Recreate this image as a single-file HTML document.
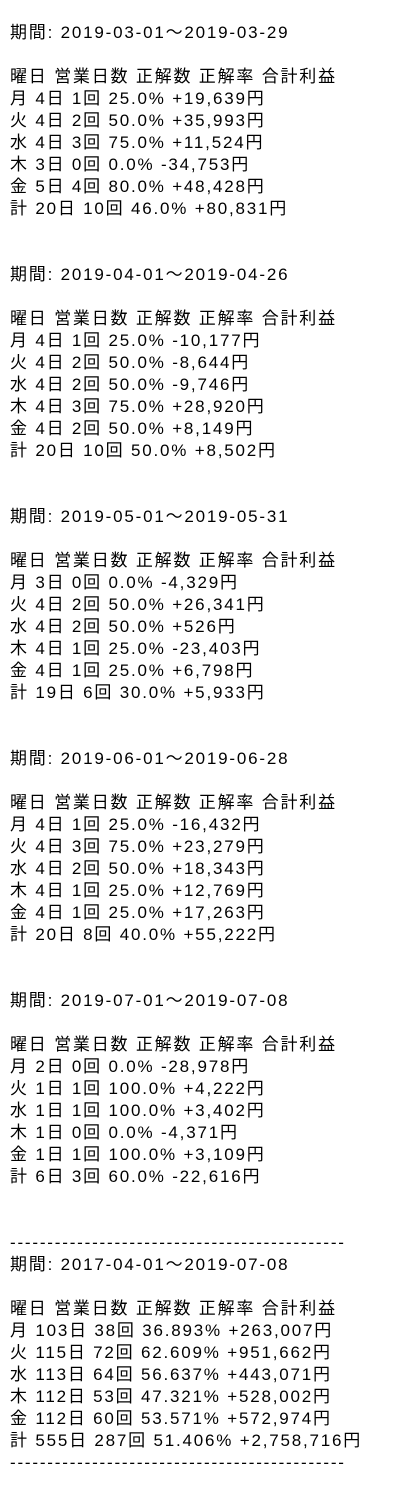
<!DOCTYPE html>
<html><head><meta charset="utf-8"><style>
body{margin:0;background:#fff;}
pre{margin:0;padding:22px 0 0 10px;font-family:"Liberation Sans","Noto Sans CJK JP",sans-serif;font-size:17px;letter-spacing:1.8px;line-height:22px;color:#000;white-space:pre;}
</style></head><body><pre>期間: 2019-03-01～2019-03-29

曜日 営業日数 正解数 正解率 合計利益
月 4日 1回 25.0% +19,639円
火 4日 2回 50.0% +35,993円
水 4日 3回 75.0% +11,524円
木 3日 0回 0.0% -34,753円
金 5日 4回 80.0% +48,428円
計 20日 10回 46.0% +80,831円


期間: 2019-04-01～2019-04-26

曜日 営業日数 正解数 正解率 合計利益
月 4日 1回 25.0% -10,177円
火 4日 2回 50.0% -8,644円
水 4日 2回 50.0% -9,746円
木 4日 3回 75.0% +28,920円
金 4日 2回 50.0% +8,149円
計 20日 10回 50.0% +8,502円


期間: 2019-05-01～2019-05-31

曜日 営業日数 正解数 正解率 合計利益
月 3日 0回 0.0% -4,329円
火 4日 2回 50.0% +26,341円
水 4日 2回 50.0% +526円
木 4日 1回 25.0% -23,403円
金 4日 1回 25.0% +6,798円
計 19日 6回 30.0% +5,933円


期間: 2019-06-01～2019-06-28

曜日 営業日数 正解数 正解率 合計利益
月 4日 1回 25.0% -16,432円
火 4日 3回 75.0% +23,279円
水 4日 2回 50.0% +18,343円
木 4日 1回 25.0% +12,769円
金 4日 1回 25.0% +17,263円
計 20日 8回 40.0% +55,222円


期間: 2019-07-01～2019-07-08

曜日 営業日数 正解数 正解率 合計利益
月 2日 0回 0.0% -28,978円
火 1日 1回 100.0% +4,222円
水 1日 1回 100.0% +3,402円
木 1日 0回 0.0% -4,371円
金 1日 1回 100.0% +3,109円
計 6日 3回 60.0% -22,616円


---------------------------------------------
期間: 2017-04-01～2019-07-08

曜日 営業日数 正解数 正解率 合計利益
月 103日 38回 36.893% +263,007円
火 115日 72回 62.609% +951,662円
水 113日 64回 56.637% +443,071円
木 112日 53回 47.321% +528,002円
金 112日 60回 53.571% +572,974円
計 555日 287回 51.406% +2,758,716円
---------------------------------------------</pre></body></html>
